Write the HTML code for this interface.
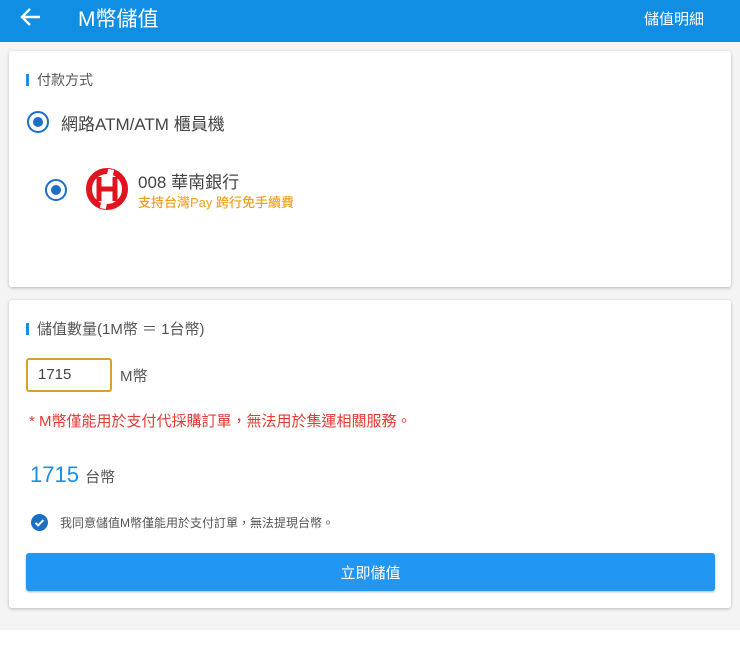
<!DOCTYPE html>
<html><head><meta charset="utf-8"><style>
*{margin:0;padding:0;box-sizing:border-box}
body{width:740px;height:668px;background:#fff;font-family:"Liberation Sans","Noto Sans CJK TC",sans-serif;position:relative;overflow:hidden}
.bg{position:absolute;left:0;top:42px;width:740px;height:588px;background:#f4f4f4}
.hdr{position:absolute;left:0;top:0;width:740px;height:42px;background:#0f8ee4;color:#fff}
.card{position:absolute;left:9px;width:722px;background:#fff;border-radius:3px;box-shadow:0 1px 3px rgba(0,0,0,.25)}
.t{position:absolute;white-space:nowrap}
.bar{position:absolute;width:3px;height:12px;background:#1a8fe3}
.radio{position:absolute;width:22px;height:22px;border:2px solid #1b6fc6;border-radius:50%}
.radio::after{content:"";position:absolute;left:4px;top:4px;width:10px;height:10px;border-radius:50%;background:#1b6fc6}
</style></head><body>
<div class="bg"></div>
<div class="hdr">
<svg style="position:absolute;left:20px;top:7px" width="22" height="20" viewBox="0 0 22 20"><path d="M20 10H3M10 2L2 10l8 8" stroke="#fff" stroke-width="2.4" fill="none"/></svg>
<div class="t" style="left:78px;top:3px;font-size:21px">M幣儲值</div>
<div class="t" style="left:644px;top:8px;font-size:15px">儲值明細</div>
</div>
<div class="card" style="top:51px;height:236px">
<div class="bar" style="left:17px;top:23px"></div>
<div class="t" style="left:28px;top:19px;font-size:14px;color:#555">付款方式</div>
<div class="radio" style="left:18px;top:60px"></div>
<div class="t" style="left:52px;top:59px;font-size:17px;color:#444">網路ATM/ATM 櫃員機</div>
<div class="radio" style="left:36px;top:128px"></div>
<svg style="position:absolute;left:76px;top:116px" width="44" height="44" viewBox="0 0 44 44"><circle cx="22" cy="22" r="18" fill="none" stroke="#e0141e" stroke-width="6"/><rect x="19" y="2" width="6" height="40" fill="#fff" transform="rotate(12 22 22)"/><path d="M14 10v24M30 10v24M14 22h16" stroke="#e0141e" stroke-width="5"/></svg>
<div class="t" style="left:129px;top:117px;font-size:17px;color:#444">008 華南銀行</div>
<div class="t" style="left:129px;top:141px;font-size:13px;color:#f0a020;font-weight:500">支持台灣Pay 跨行免手續費</div>
</div>
<div class="card" style="top:300px;height:308px">
<div class="bar" style="left:17px;top:23px"></div>
<div class="t" style="left:28px;top:18px;font-size:15px;color:#555">儲值數量(1M幣 ＝ 1台幣)</div>
<div style="position:absolute;left:17px;top:58px;width:86px;height:34px;border:2px solid #d9a030;border-radius:3px"></div>
<div class="t" style="left:29px;top:66px;font-size:15px;color:#444">1715</div>
<div class="t" style="left:111px;top:65px;font-size:15px;color:#555">M幣</div>
<div class="t" style="left:20px;top:110px;font-size:15px;color:#e53935">* M幣僅能用於支付代採購訂單，無法用於集運相關服務。</div>
<div class="t" style="left:21px;top:162px;font-size:22px;color:#1a8fe3">1715 <span style="font-size:15px;color:#555">台幣</span></div>
<svg style="position:absolute;left:22px;top:214px" width="17" height="17" viewBox="0 0 17 17"><circle cx="8.5" cy="8.5" r="8.5" fill="#1b6fc6"/><path d="M4.5 8.8l2.6 2.6 5.3-5.3" stroke="#fff" stroke-width="2" fill="none"/></svg>
<div class="t" style="left:51px;top:214px;font-size:12px;color:#555">我同意儲值M幣僅能用於支付訂單，無法提現台幣。</div>
<div style="position:absolute;left:17px;top:253px;width:689px;height:38px;background:#2196f3;border-radius:3px;box-shadow:0 1px 2px rgba(0,0,0,.3);color:#fff;font-size:15px;text-align:center;line-height:42px">立即儲值</div>
</div>
</body></html>
